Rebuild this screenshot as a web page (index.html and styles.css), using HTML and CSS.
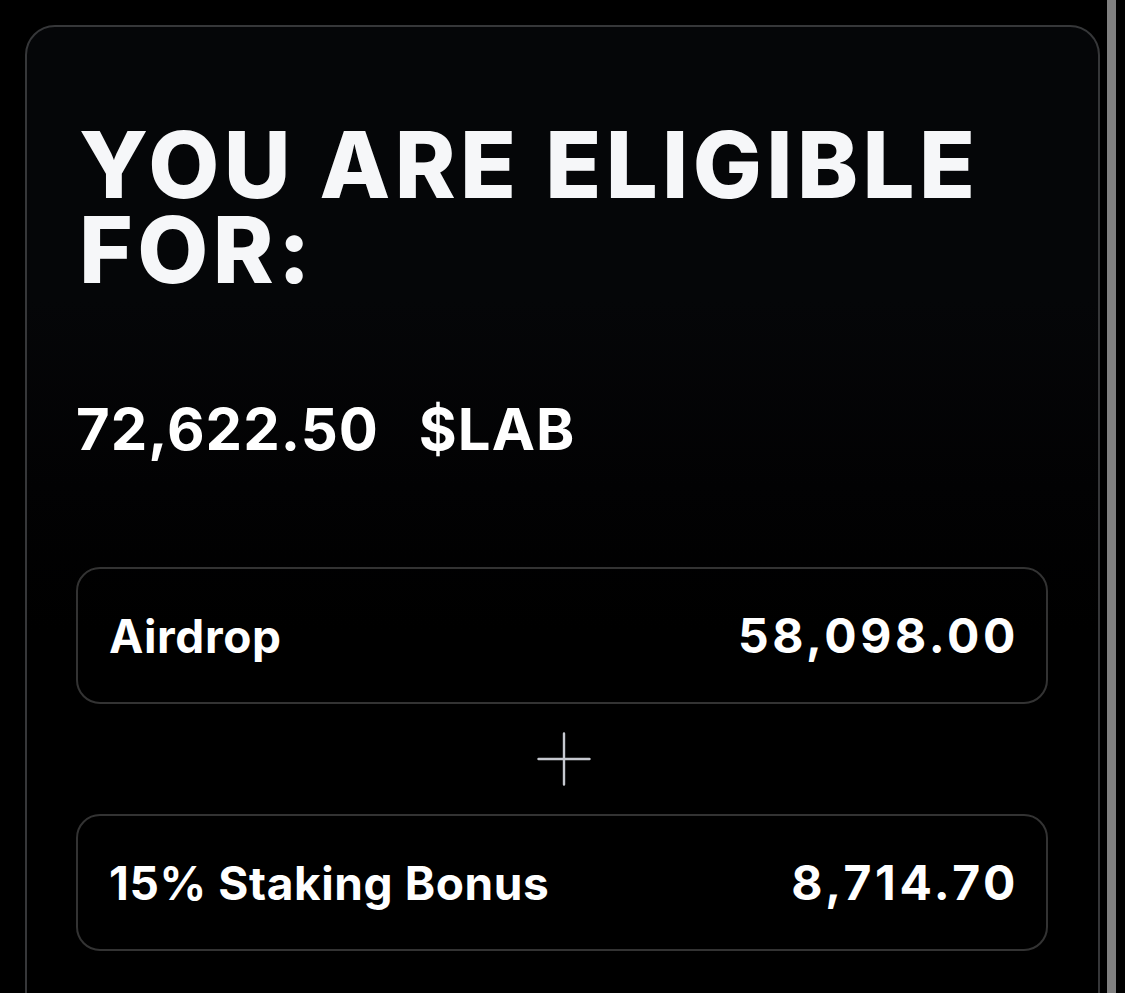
FILE: index.html
```html
<!DOCTYPE html>
<html lang="en">
<head>
<meta charset="utf-8">
<title>Eligibility</title>
<link rel="stylesheet" href="styles.css">
</head>
<body>
<div class="page">
  <main class="viewport">
    <section class="card">
      <h1 class="title">YOU ARE ELIGIBLE<br>FOR:</h1>
      <p class="total"><span class="total-amount">72,622.50</span><span class="total-token">$LAB</span></p>
      <div class="breakdown">
        <div class="row">
          <span class="label">Airdrop</span>
          <span class="value">58,098.00</span>
        </div>
        <div class="plus">
          <svg width="54" height="54" viewBox="0 0 54 54" aria-hidden="true">
            <path d="M27 1.5V52.5M1.5 27H52.5" stroke="#c6c9d0" stroke-width="2.4" stroke-linecap="round" fill="none"/>
          </svg>
        </div>
        <div class="row">
          <span class="label">15% Staking Bonus</span>
          <span class="value">8,714.70</span>
        </div>
      </div>
    </section>
  </main>
  <div class="scrollbar"></div>
</div>
</body>
</html>
```
FILE: styles.css
```css
html, body {
  margin: 0;
  padding: 0;
  height: 100%;
  overflow: hidden;
  background: #000;
}

body {
  font-family: "Inter", "Roboto", "Liberation Sans", sans-serif;
  color: #fff;
}

.page {
  display: flex;
  height: 993px;
}

.viewport {
  width: 1100px;
  padding: 25px 0 0 25px;
  box-sizing: border-box;
  overflow: hidden;
}

.card {
  box-sizing: border-box;
  width: 1075px;
  min-height: 1100px;
  border: 2px solid #363739;
  border-radius: 30px;
  padding: 95px 50px 0 49px;
  background: linear-gradient(180deg, #050608 0%, #050608 25%, #020203 42%, #000 55%);
}

.title {
  margin: 0 0 0 3px;
  font-size: 92px;
  font-weight: 800;
  line-height: 85px;
  letter-spacing: 4.4px;
  color: #f6f7f9;
}

.total {
  margin: 102px 0 0;
  display: flex;
  gap: 40px;
  font-size: 58px;
  font-weight: 700;
  line-height: 70px;
  letter-spacing: 1px;
}

.breakdown {
  margin-top: 103px;
  display: flex;
  flex-direction: column;
}

.row {
  box-sizing: border-box;
  height: 137px;
  border: 2px solid #333333;
  border-radius: 24px;
  padding: 0 27px 0 31px;
  display: flex;
  align-items: center;
  justify-content: space-between;
}

.label {
  font-size: 46px;
  font-weight: 700;
  letter-spacing: 0.6px;
}

.value {
  font-size: 48px;
  font-weight: 700;
  letter-spacing: 3.6px;
}

.plus {
  height: 110px;
  display: flex;
  align-items: center;
  justify-content: center;
  padding-left: 3px;
}

.scrollbar {
  width: 9px;
  margin-left: 7px;
  background: #808080;
  height: 100%;
}
```
